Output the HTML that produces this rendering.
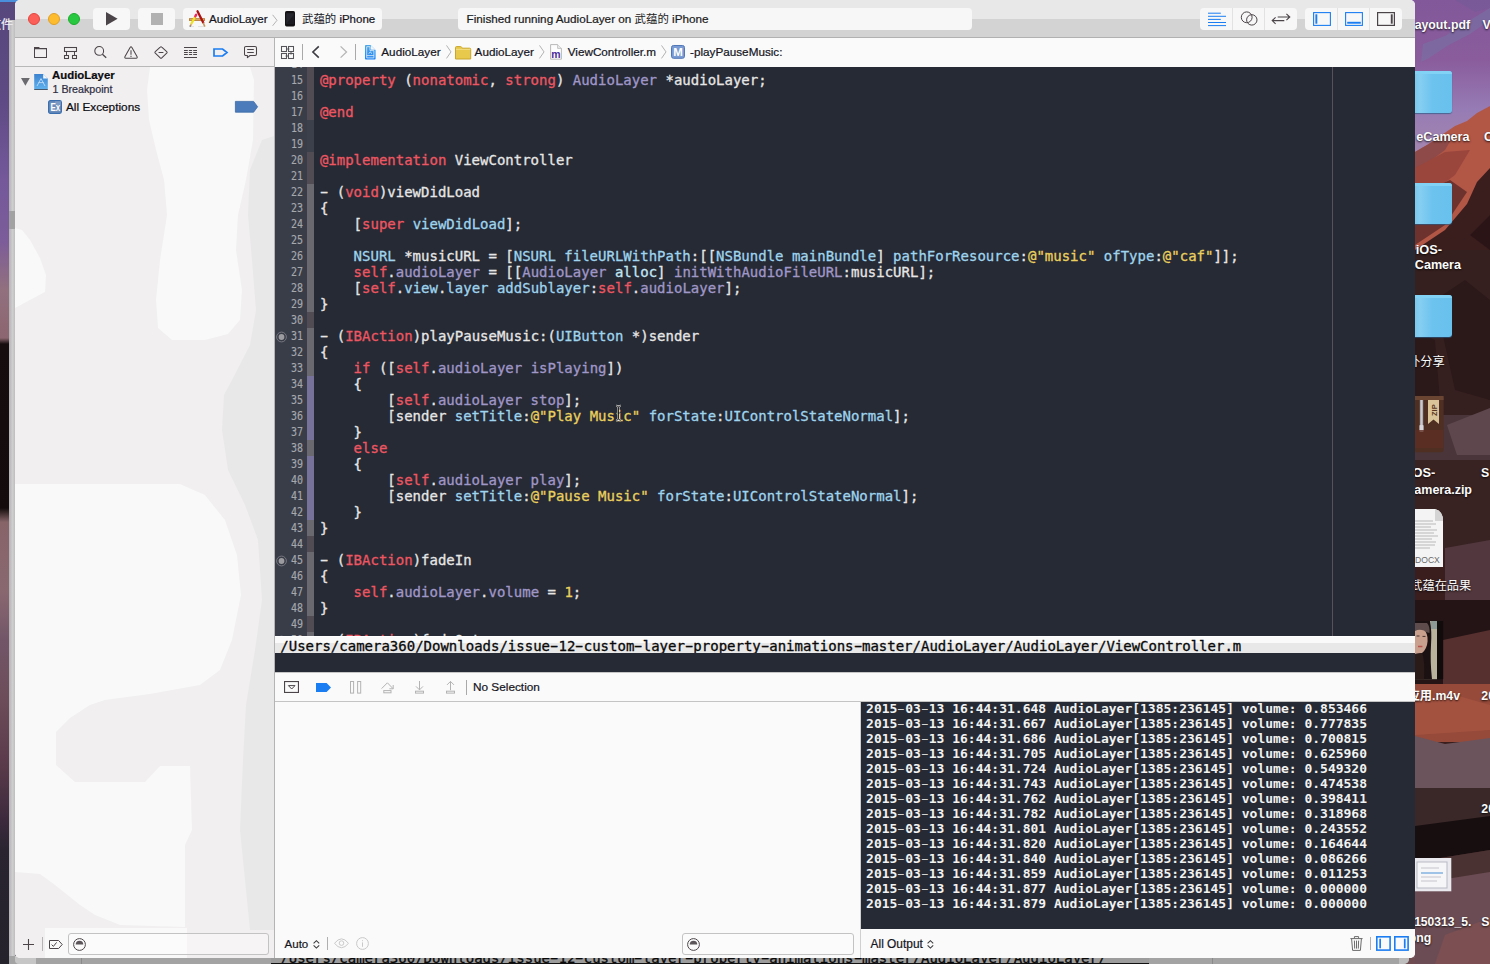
<!DOCTYPE html>
<html lang="zh">
<head>
<meta charset="utf-8">
<title>AudioLayer — ViewController.m</title>
<style>
*{box-sizing:border-box;margin:0;padding:0}
html,body{width:1490px;height:964px;overflow:hidden}
body{position:relative;background:#6e4c50;font-family:"Liberation Sans","Noto Sans CJK SC",sans-serif;font-size:11px;color:#111}
.abs{position:absolute}
/* desktop */
#deskL{left:0;top:0;width:24px;height:964px;background:linear-gradient(#56477c 0,#5e4a84 100px,#74589a 180px,#7c5c9a 240px,#92707e 290px,#8c6670 338px,#160d0e 344px,#130b0c 508px,#866468 522px,#8a6870 590px,#725668 640px,#6c4c58 700px,#5c3c4c 760px,#3c2a3c 820px,#292430 850px,#25222c 964px)}
#deskLg{left:9px;top:20px;width:6px;height:944px;background:linear-gradient(90deg,#b4b2b4,#d0cfd0 60%,#bdbdbd)}
#deskR{left:1415px;top:0;width:75px;height:964px;overflow:hidden;background:linear-gradient(#8a5c9a 0,#7a62a4 90px,#8a70a8 130px,#a06a78 170px,#8c4a44 220px,#5a2c28 290px,#3a2020 360px,#2c1a1c 430px,#3c2628 520px,#2a1a1c 600px,#6a3c34 700px,#8c4c40 720px,#5a3c40 780px,#3a2a2c 830px,#2a1c1e 880px,#5a3c44 910px,#8a4c4c 964px)}
#deskB{left:9px;top:956px;width:1400px;height:8px;background:#a3a3a3;overflow:hidden;border-radius:0 0 5px 0}
.dlabel{margin-top:0.6px;-webkit-text-stroke:0 !important;color:#fbfbfb;font-weight:bold;font-size:12px;white-space:nowrap;text-shadow:0 1px 2px rgba(0,0,0,.8)}
.folder{background:linear-gradient(90deg,#6abfea 0,#86cff2 25%,#6cc3ee 55%,#68c0ec 100%);border-radius:3px}
/* window */
#win{left:15px;top:0;width:1400px;height:958px;border-radius:5px;overflow:hidden;background:#fafafa}
#titlebar{left:0;top:0;width:1400px;height:38px;background:linear-gradient(#e8e8e8 0,#e8e8e8 19px,#d3d3d3 19px,#d3d3d3 37px,#b1b1b1 37px)}
.tbtn{background:#f7f7f7;border-radius:4px;height:22px;top:8px}
.light{width:12px;height:12px;border-radius:6px;top:13px}
.seg{top:8px;height:22px;background:#f7f7f7;border-radius:4px}
.segd{top:8px;width:1px;height:22px;background:#e2e2e2}
/* navigator */
#nav{left:0;top:38px;width:259px;height:920px;background:#f1eff0}
#navbar{left:0;top:0;width:259px;height:29px;border-bottom:1px solid #b9b8b9;background:#f1eff0}
#split{left:259px;top:38px;width:1px;height:920px;background:#b4b4b4}
.blob{background:#f9f9f9}
/* editor */
#jump{left:260px;top:38px;width:1140px;height:29px;background:#fafafa}
#code{left:260px;top:67px;width:1140px;height:569px;background:#262a34;overflow:hidden;font-family:"DejaVu Sans Mono","Liberation Mono",monospace}
#gutter{left:0;top:0;width:32px;height:569px;background:#393d48}
#ribbon{left:32px;top:0;width:7px;height:569px;background:#514c54}
#nums{left:-12.3px;top:-11.4px;width:40px;text-align:right;font-size:11.5px;line-height:16px;color:#a6a8ae;-webkit-text-stroke:0.15px;transform:scaleX(0.87);transform-origin:100% 0}
#nums div{height:16px}
#lines{left:44.9px;top:-11px;font-size:14px;line-height:16px;color:#e6e6e6;white-space:pre;-webkit-text-stroke:0.3px}
#lines div{height:16px}
i{font-style:normal;display:inline-block;transform:scaleX(1.75)}
.k{color:#ee5662}.w{color:#e6e6e6}.c{color:#9fd4ee}.c2{color:#c4e6f4}.l{color:#a097c9}.y{color:#ead05e}
#guide{left:1057px;top:0;width:1px;height:569px;background:#585157}
#tip{left:260px;top:636.2px;width:1140px;height:17.3px;background:linear-gradient(#fff 0,#fff 1.2px,#fafafa 1.2px,#fafafa 7.4px,#e8e8e8 7.4px,#e8e8e8 18px);font-family:"DejaVu Sans Mono","Liberation Mono",monospace;font-size:14px;line-height:20px;color:#0a0a0a;white-space:pre;padding-left:5.3px;overflow:hidden;-webkit-text-stroke:0.3px}
#dark2{left:260px;top:653px;width:1140px;height:19px;background:#262a34}
#dbgbar{left:260px;top:672px;width:1140px;height:30px;background:#fafafa;border-bottom:1px solid #c4c4c4}
#vars{left:260px;top:702px;width:585px;height:228px;background:#fafafa}
#vsplit{left:845px;top:702px;width:1px;height:256px;background:#d0d0d0}
#console{left:846px;top:702px;width:554px;height:227.4px;background:#262a34;font-family:"DejaVu Sans Mono","Liberation Mono",monospace;font-weight:bold;font-size:13px;line-height:15px;color:#f2f2f2;white-space:pre;padding:0 0 0 5.1px;overflow:hidden}
#console i{font-weight:normal;opacity:.85}
#console div{position:relative;top:-1px}
#console div{height:15px}
#botbar{left:260px;top:929px;width:1140px;height:29px;background:#fafafa}
.fbox{border:1px solid #c3c3c3;border-radius:3px;background:rgba(255,255,255,.35)}
svg{position:absolute;overflow:visible}
.t{white-space:nowrap;position:absolute;-webkit-text-stroke:0.22px}
.cj{-webkit-text-stroke:0;font-size:11.4px}
</style>
</head>
<body>
<div id="deskL" class="abs"></div>
<div id="deskLg" class="abs"><div class="abs" style="left:0;top:191px;width:6px;height:18px;background:#a3a2a3"></div></div>
<div id="deskR" class="abs">
<svg style="left:0;top:0" width="75" height="964" viewBox="0 0 75 964">
<defs><linearGradient id="sky" x1="0" y1="0" x2="0" y2="1"><stop offset="0" stop-color="#82589a"/><stop offset="0.3" stop-color="#8a5c9c"/><stop offset="0.55" stop-color="#967cb4"/><stop offset="0.78" stop-color="#a686b0"/><stop offset="1" stop-color="#a88290"/></linearGradient></defs>
<rect x="0" y="0" width="75" height="200" fill="url(#sky)"/><polygon points="8,44 30,36 52,22 75,8 75,20 55,34 32,46 14,58 6,62" fill="#7a6ea2" opacity=".75"/><polygon points="40,0 75,0 75,8 60,12" fill="#785a98" opacity=".8"/>
<polygon points="0,152 12,145 25,136 40,126 52,121 62,113 75,106 75,964 0,964" fill="#b25646"/>
<polygon points="0,152 12,145 25,138 40,133 30,150 10,165 0,172" fill="#8e4a48"/>
<polygon points="0,168 30,152 55,150 40,175 20,190 0,200" fill="#9a463c"/>
<polygon points="0,196 35,180 52,192 30,225 0,245" fill="#6e322e"/>
<polygon points="75,168 62,182 52,204 30,230 0,250 0,964 75,964" fill="#3a1e1e"/>
<polygon points="75,215 55,235 75,250" fill="#2a1416"/>
<rect x="0" y="250" width="75" height="165" fill="#36201f"/>
<polygon points="20,300 50,280 75,300 75,400 40,390" fill="#2b1819"/>
<polygon points="0,330 20,340 25,400 0,410" fill="#2b1819"/>
<rect x="0" y="415" width="75" height="45" fill="#4a363a"/>
<polygon points="32,425 75,408 75,455 42,455" fill="#5e484e"/>
<rect x="0" y="460" width="75" height="90" fill="#382222"/>
<polygon points="30,548 75,540 75,600 30,600" fill="#52383e"/>
<rect x="0" y="600" width="75" height="90" fill="#241415"/>
<polygon points="28,640 75,630 75,700 28,700" fill="#56302e"/>
<rect x="0" y="684" width="75" height="58" fill="#964a3a"/>
<polygon points="0,700 40,695 75,705 75,730 0,735" fill="#a45240"/>
<polygon points="0,736 30,744 75,738 75,792 0,792" fill="#6c545c"/>
<rect x="0" y="788" width="75" height="48" fill="#3a2829"/>
<polygon points="0,826 75,816 75,850 0,862" fill="#170e10"/>
<polygon points="0,862 75,850 75,882 0,892" fill="#4a3232"/>
<polygon points="0,884 75,872 75,964 0,964" fill="#6c4c54"/>
<polygon points="30,935 75,918 75,964 20,964" fill="#7c5052"/>
</svg><div class="abs folder" style="left:-6px;top:71px;width:43px;height:42.4px;box-shadow:0 1px 1px rgba(40,90,130,.7)"></div><div class="abs" style="left:-6px;top:71px;width:43px;height:3px;background:#82d2f5;border-radius:3px 3px 0 0"></div><div class="abs folder" style="left:-6px;top:183.2px;width:43px;height:41.2px;box-shadow:0 1px 1px rgba(40,90,130,.7)"></div><div class="abs" style="left:-6px;top:183.2px;width:43px;height:3px;background:#82d2f5;border-radius:3px 3px 0 0"></div><div class="abs folder" style="left:-6px;top:295.3px;width:43px;height:41.4px;box-shadow:0 1px 1px rgba(40,90,130,.7)"></div><div class="abs" style="left:-6px;top:295.3px;width:43px;height:3px;background:#82d2f5;border-radius:3px 3px 0 0"></div><span class="t dlabel" style="right:20px;top:16px;font-size:12.3px;line-height:16px;">Layout.pdf</span><span class="t dlabel" style="left:67.5px;top:16px;font-size:12.3px;line-height:16px">V</span><span class="t dlabel" style="right:20.5px;top:128.5px;font-size:12.6px;line-height:16px;">eCamera</span><span class="t dlabel" style="left:69px;top:128.5px;font-size:12.3px;line-height:16px">C</span><span class="t dlabel" style="right:48px;top:241px;font-size:12.8px;line-height:16px;">iOS-</span><span class="t dlabel" style="right:29px;top:256.5px;font-size:12.6px;line-height:16px;">Camera</span><span class="t dlabel" style="right:45.4px;top:353px;font-size:12.2px;line-height:16px;font-weight:normal;">外分享</span><svg style="left:-8px;top:395.8px" width="37" height="57" viewBox="0 0 37 57"><rect x="0" y="0" width="36.6" height="56.2" rx="2.5" fill="#4e2f22"/><rect x="0" y="0" width="36.6" height="4" fill="#6a4632"/><rect x="13" y="4" width="3" height="26" fill="#c9c9cf"/><path d="M13,4 v26 M16,4 v26" stroke="#777" stroke-width="0.6"/><rect x="12.4" y="29" width="4.2" height="7" rx="1" fill="#d8d8dc"/><path d="M21,4 H32 V28 L26.5,23.5 L21,28 Z" fill="#d9c49a"/><text transform="translate(29.6,20) rotate(-90)" font-family="Liberation Sans,sans-serif" font-weight="bold" font-size="7.5" fill="#5a3420">ZIP</text><rect x="8" y="34" width="28" height="18" fill="#5f2e24" opacity=".8"/></svg><span class="t dlabel" style="right:54.8px;top:464px;font-size:12.8px;line-height:16px;">iOS-</span><span class="t dlabel" style="left:66px;top:464px;font-size:12.3px;line-height:16px">S</span><span class="t dlabel" style="right:18px;top:481px;font-size:12.5px;line-height:16px;">Camera.zip</span><svg style="left:-10px;top:508.6px" width="39" height="59" viewBox="0 0 39 59"><path d="M0,0 H30 Q38,2 38,12 V58 H0 Z" fill="#f4f4f4"/><path d="M30,0 Q38,2 38,12 H30 Z" fill="#d4d4d4"/><g stroke="#a9a9a9" stroke-width="0.8"><path d="M10,12 H28 M10,15 H31 M10,18 H26 M10,21 H32 M10,24 H29 M10,27 H33 M10,30 H27 M10,33 H31 M10,36 H30 M10,39 H25"/></g><text x="10" y="54" font-family="Liberation Sans,sans-serif" font-size="8.6" fill="#6a6a6a">DOCX</text></svg><span class="t dlabel" style="right:18.8px;top:577px;font-size:12.2px;line-height:16px;font-weight:normal;">武蕴在品果</span><svg style="left:0;top:620.8px" width="29" height="59" viewBox="0 0 29 59"><rect x="0" y="0" width="28.2" height="58.2" fill="#120b0c"/><rect x="0" y="0" width="22" height="58.2" fill="#b9b39c"/><rect x="16" y="0" width="6" height="8" fill="#8e9a96"/><path d="M0,0 H15 Q17,10 16,24 Q15,40 17,58.2 H0 Z" fill="#1c1112"/><path d="M0,2 H12 Q15,5 14.5,12 L3,9 L0,12 Z" fill="#5e4c4c"/><path d="M0,10 Q4,8 9,9.5 Q13,12 12.6,20 Q12,28 7,32 L0,33 Z" fill="#c9a08e"/><path d="M1.5,15 h3 M7.5,15.4 h3" stroke="#4a3430" stroke-width="1"/><path d="M3,25.5 h4.4" stroke="#b8544e" stroke-width="1.5"/><path d="M0,33 L7,32 Q10,38 9,58.2 H0Z" fill="#2a1a18"/></svg><span class="t dlabel" style="right:30px;top:687.8px;font-size:12.3px;line-height:16px;">应用.m4v</span><span class="t dlabel" style="left:66.3px;top:687.8px;font-size:12.3px;line-height:16px">20</span><span class="t dlabel" style="left:66.3px;top:800.5px;font-size:12.3px;line-height:16px">20</span><svg style="left:-4px;top:857.5px" width="41" height="34" viewBox="0 0 41 34"><rect x="0" y="0" width="40.3" height="33.3" fill="#e9e9ee"/><rect x="6" y="4" width="30" height="26" fill="#f6f6f8" stroke="#b9b9c4" stroke-width="1"/><path d="M10,15 H32" stroke="#7aaee0" stroke-width="1.4"/><path d="M10,10 H28 M10,19 H30 M10,23 H26" stroke="#c4c4cc" stroke-width="1"/></svg><span class="t dlabel" style="right:18.7px;top:913.1px;font-size:12.1px;line-height:16px;">20150313_5.</span><span class="t dlabel" style="left:66.3px;top:913.1px;font-size:12.3px;line-height:16px">S</span><span class="t dlabel" style="right:58.7px;top:929.1px;font-size:12.3px;line-height:16px;">png</span>
</div>
<div class="abs" style="left:1405px;top:0;width:10px;height:10px;background:#835b9d"></div><div class="abs" style="left:1405px;top:948px;width:10px;height:10px;background:#7a5860"></div>
<div class="abs" style="left:0;top:0;width:24px;height:2px;background:#4a8fdc"></div>
<span class="t" style="right:1477px;top:17px;font-size:12px;line-height:16px;color:#efeff4;font-weight:normal">文件</span>
<div id="deskB" class="abs">
<div class="abs" style="left:6px;top:0;width:21px;height:8px;background:#c6c6c6;border-radius:0 0 0 4px"></div>
<div class="abs" style="left:72px;top:0;width:1px;height:8px;background:#8a8a8a"></div>
<div class="abs" style="left:262px;top:0;width:878px;height:8px;background:#9c9c9c;border-bottom:1px solid #111;overflow:hidden;font-family:'DejaVu Sans Mono','Liberation Mono',monospace;font-size:14px;line-height:20px;color:#0a0a0a;white-space:pre;-webkit-text-stroke:0.3px"><span style="position:absolute;left:9.3px;top:-8.5px">/Users/camera360/Downloads/issue<i>-</i>12<i>-</i>custom<i>-</i>layer<i>-</i>property<i>-</i>animations<i>-</i>master/AudioLayer/AudioLayer/</span></div>
<div class="abs" style="left:1203px;top:0;width:1px;height:8px;background:#8a8a8a"></div>
<div class="abs" style="left:1390px;top:0;width:10px;height:8px;background:#bdbdbd"></div>
</div>

<div id="win" class="abs">
 <div id="titlebar" class="abs">

  <div class="abs light" style="left:13px;background:#fc5f57;border:0.5px solid #e2463f"></div>
  <div class="abs light" style="left:33px;background:#fdbc2e;border:0.5px solid #e0a028"></div>
  <div class="abs light" style="left:53px;background:#28c840;border:0.5px solid #1eab2e"></div>
  <div class="abs tbtn" style="left:78px;width:37px"></div>
  <svg style="left:91px;top:12px" width="12" height="14"><path d="M0,0 L11.6,6.8 L0,13.6Z" fill="#4b4549"/></svg>
  <div class="abs tbtn" style="left:123px;width:37px"></div>
  <div class="abs" style="left:136px;top:13px;width:12px;height:12px;background:#b1b1b1"></div>
  <div class="abs tbtn" style="left:168px;width:199px"></div>
  <svg style="left:173px;top:10px" width="18" height="18" viewBox="0 0 18 18">
    <rect x="1" y="8.2" width="16" height="2.7" fill="#b57a32"/><rect x="1.8" y="9" width="14.4" height="1.1" fill="#d9aa62"/>
    <path d="M9.5,1.2 L15.2,12.6" stroke="#b01212" stroke-width="2.3" stroke-linecap="round" fill="none"/>
    <path d="M15.2,12.8 L16.8,16.6" stroke="#c8985e" stroke-width="1.6" fill="none"/>
    <path d="M7.4,6.2 L3.2,14" stroke="#efe21e" stroke-width="2.3" fill="none"/>
    <path d="M8.2,4.7 L7.3,6.3" stroke="#ee2a5e" stroke-width="2.4" stroke-linecap="round" fill="none"/>
    <path d="M3.2,14 L2.5,15.8" stroke="#d9a86a" stroke-width="1.8" fill="none"/>
    <path d="M2.5,15.7 L2.1,16.6" stroke="#1c1c24" stroke-width="1.4" fill="none"/>
    <path d="M2,16.6 H6 M10,16.6 H16" stroke="#cfcfcf" stroke-width="0.6"/>
  </svg>
  <span class="t" style="left:194px;top:12px;font-size:11.6px;line-height:14px;color:#16161e">AudioLayer</span>
  <svg style="left:257px;top:14px" width="6" height="13"><path d="M0.6,0.8 L5,6.3 L0.6,11.8" fill="none" stroke="#b4b4b4" stroke-width="1"/></svg>
  <svg style="left:270px;top:11px" width="10" height="16"><rect x="0" y="0" width="10" height="15.4" rx="1.6" fill="#141214"/><rect x="1.2" y="2.2" width="7.6" height="10.6" fill="#26262e"/><path d="M1.2,12.8 L8.8,4 L8.8,12.8Z" fill="#1a1a20"/></svg>
  <span class="t" style="left:287px;top:11px;font-size:11.5px;line-height:16px;color:#16161e"><span class="cj">武蕴的</span> iPhone</span>
  <div class="abs tbtn" style="left:442.5px;width:514.5px"></div>
  <span class="t" style="left:451.5px;top:11px;font-size:11.72px;line-height:16px;color:#1c1c1c">Finished running AudioLayer on <span class="cj">武蕴的</span> iPhone</span>
  <div class="abs seg" style="left:1185px;width:97px"></div>
  <div class="abs segd" style="left:1217px"></div><div class="abs segd" style="left:1249px"></div>
  <div class="abs seg" style="left:1290px;width:97px"></div>
  <div class="abs segd" style="left:1322px"></div><div class="abs segd" style="left:1354px"></div>
<svg style="left:1193px;top:12px" width="18" height="15" viewBox="0 0 18 15"><path d="M0,1.2 H12.8 M0,4.3 H18 M0,7.4 H12.8 M0,10.5 H18 M0,13.6 H18" stroke="#1b7df2" stroke-width="1"/></svg><svg style="left:1225px;top:11px" width="14" height="15" viewBox="0 0 14 15"><circle cx="6.7" cy="6.3" r="5.4" fill="none" stroke="#4b4549" stroke-width="1"/><circle cx="11.8" cy="8.9" r="5.2" fill="none" stroke="#4b4549" stroke-width="1"/></svg><svg style="left:1256px;top:12px" width="22" height="14" viewBox="0 0 22 14"><g fill="none" stroke="#4b4549" stroke-width="1.1"><path d="M6.7,5 H18.6 M15.4,1.8 L18.8,5 L15.4,8.2"/><path d="M13.3,8.6 H1.4 M4.6,5.4 L1.2,8.6 L4.6,11.8"/></g></svg><svg style="left:1298px;top:12px" width="18" height="14" viewBox="0 0 18 14"><rect x="0.6" y="0.6" width="16.8" height="12.8" fill="none" stroke="#1b7df2" stroke-width="1.1"/><rect x="2.4" y="2.3" width="1.9" height="9.4" fill="#1b7df2"/></svg><svg style="left:1330px;top:12px" width="18" height="14" viewBox="0 0 18 14"><rect x="0.6" y="0.6" width="16.8" height="12.8" fill="none" stroke="#1b7df2" stroke-width="1.1"/><rect x="2.2" y="9.8" width="13.6" height="1.9" fill="#1b7df2"/></svg><svg style="left:1362px;top:12px" width="18" height="14" viewBox="0 0 18 14"><rect x="0.6" y="0.6" width="16.8" height="12.8" fill="none" stroke="#4b4549" stroke-width="1.2"/><rect x="13.8" y="2.3" width="1.9" height="9.4" fill="#4b4549"/></svg>

 </div>
 <div id="nav" class="abs">
<div id="navbar" class="abs"><svg style="left:19px;top:9px" width="13" height="11" viewBox="0 0 13 11"><path d="M0.5,10.5 V0.5 H4.7 L5.9,1.6 H12.5 V10.5 Z M0.5,1.6 H5.9" fill="none" stroke="#4b4549" stroke-width="1.05"/></svg><svg style="left:49px;top:9px" width="13" height="12" viewBox="0 0 13 12"><g fill="none" stroke="#4b4549" stroke-width="1.05"><rect x="0.5" y="0.5" width="12" height="4"/><path d="M2.5,4.5 V8.5 M10.5,4.5 V8.5"/><rect x="0.5" y="8.5" width="4" height="3"/><rect x="8.5" y="8.5" width="4" height="3"/></g></svg><svg style="left:79px;top:8px" width="13" height="12" viewBox="0 0 13 12"><circle cx="5.2" cy="4.9" r="4.4" fill="none" stroke="#4b4549" stroke-width="1.05"/><path d="M8.4,8.2 L12.2,11.8" stroke="#4b4549" stroke-width="1.25"/></svg><svg style="left:108.5px;top:8px" width="14" height="13" viewBox="0 0 14 13"><path d="M6.1,1.5 Q7,0.1 7.9,1.5 L13,10.5 Q13.7,12.2 12.1,12.3 H1.9 Q0.3,12.2 1,10.5 Z" fill="none" stroke="#4b4549" stroke-width="1.05" stroke-linejoin="round"/><path d="M7,4.2 V8.8 M7,9.8 V11" stroke="#4b4549" stroke-width="1.05"/></svg><svg style="left:138.5px;top:8px" width="14" height="13" viewBox="0 0 14 13"><path d="M6.2,1.1 Q7,0.3 7.8,1.1 L12.7,5.7 Q13.5,6.4 12.7,7.2 L7.8,11.8 Q7,12.6 6.2,11.8 L1.3,7.2 Q0.5,6.4 1.3,5.7 Z" fill="none" stroke="#4b4549" stroke-width="1.05"/><path d="M4.6,6.5 H9.4" stroke="#4b4549" stroke-width="1.05"/></svg><svg style="left:169px;top:9px" width="13" height="11" viewBox="0 0 13 11"><path d="M0,0.5 H13 M0,10.5 H13" stroke="#4b4549" stroke-width="1.05"/><path d="M0,3.5 H3.8 M4.9,3.5 H8.1 M9.2,3.5 H13 M0,5.5 H3.8 M4.9,5.5 H8.1 M9.2,5.5 H13 M0,7.5 H3.8 M4.9,7.5 H8.1 M9.2,7.5 H13" stroke="#4b4549" stroke-width="1"/></svg><svg style="left:198px;top:10px" width="15" height="9" viewBox="0 0 15 9"><path d="M1,1 H9.6 L14,4.5 L9.6,8 H1 Z" fill="none" stroke="#1b7df2" stroke-width="1.7" stroke-linejoin="miter"/></svg><svg style="left:229px;top:8px" width="13" height="12" viewBox="0 0 13 12"><path d="M2,0.5 H11 Q12.5,0.5 12.5,2 V8 Q12.5,9.5 11,9.5 H6 L3.4,11.6 V9.5 H2 Q0.5,9.5 0.5,8 V2 Q0.5,0.5 2,0.5 Z" fill="none" stroke="#4b4549" stroke-width="1.05" stroke-linejoin="round"/><path d="M3.2,3.5 H9.8 M3.2,6.5 H9.8" stroke="#4b4549" stroke-width="1"/></svg></div>
<svg style="left:0;top:0" width="259" height="920" viewBox="0 0 259 920"><polygon points="135,29 235,29 239,42 238,102 231,142 223,177 221,212 227,252 225,282 213,296 190,302 157,302 143,290 141,262 145,222 152,177 149,142 141,112 134,82 132,52" fill="#f9f9f9"/><polygon points="0,190 7,192 15,202 25,220 31,237 30,254 15,262 0,270" fill="#f9f9f9"/><polygon points="259,98 247,102 235,132 233,177 237,222 241,272 235,307 217,342 209,357 207,392 213,432 230,467 243,502 247,562 240,612 231,667 228,722 225,792 230,842 235,892 259,892" fill="#e9e8e9"/><polygon points="0,446 165,446 190,457 210,482 222,517 226,557 217,602 205,632 185,647 135,656 90,662 75,667 55,680 41,694 41,727 60,744 130,744 145,728 175,728 177,792 170,807 170,889 105,887 80,877 65,867 40,847 25,836 0,834" fill="#f9f9f9"/><polygon points="30,890 172,890 172,920 30,920" fill="#f9f9f9"/></svg><svg style="left:6px;top:40.3px" width="9" height="8" viewBox="0 0 9 8"><path d="M0,0 H8.8 L4.4,7.8 Z" fill="#6b6b6f"/></svg><svg style="left:19px;top:36px" width="14" height="16" viewBox="0 0 14 16"><defs><linearGradient id="pg" x1="0" y1="0" x2="0" y2="1"><stop offset="0" stop-color="#3c82cf"/><stop offset="1" stop-color="#60b2ee"/></linearGradient></defs><path d="M0.2,0 H9.2 L13.8,4.6 V15.2 H0.2 Z" fill="url(#pg)"/><path d="M0.2,15.2 H13.8 V16 H0.2 Z" fill="#1c2c40"/><path d="M9.2,0 L13.8,4.6 H9.2 Z" fill="#f4f8fc"/><path d="M3,12 L7,4.6 L11,12 M4.4,8.6 H9.8" stroke="#bcdaf6" stroke-width="0.9" fill="none"/></svg><span class="t" style="left:37px;top:29.5px;font-size:11.4px;font-weight:bold;line-height:14px;color:#0c0c10">AudioLayer</span><span class="t" style="left:37.5px;top:44px;font-size:10.7px;line-height:14px;color:#2e2e42">1 Breakpoint</span><svg style="left:33px;top:62px" width="14" height="14" viewBox="0 0 14 14"><rect x="0.6" y="0.6" width="12.8" height="12.8" rx="1.8" fill="#6c8cba" stroke="#3a6eae" stroke-width="1.2"/><path d="M7,1.2 H12.8 V5 H7 Z" fill="#7d9ac4"/><text x="2.4" y="11.1" font-family="Liberation Sans,sans-serif" font-weight="bold" font-size="11" fill="#fff" textLength="9.8" lengthAdjust="spacingAndGlyphs">Ex</text></svg><span class="t" style="left:51px;top:61px;font-size:11.8px;line-height:16px;color:#0c0c10">All Exceptions</span><svg style="left:220.2px;top:63px" width="23" height="11.6" viewBox="0 0 23 11.6"><path d="M0.4,0.4 H18.6 L22.6,5.8 L18.6,11.2 H0.4 Z" fill="#4b7bbb" stroke="#3d69a8" stroke-width="0.8"/></svg><svg style="left:8px;top:901px" width="11" height="11" viewBox="0 0 11 11"><path d="M5.5,0 V11 M0,5.5 H11" stroke="#4b4549" stroke-width="1.1"/></svg><div class="abs" style="left:27px;top:899px;width:1px;height:14px;background:#b5b5b5"></div><svg style="left:34px;top:902px" width="14" height="9" viewBox="0 0 14 9"><path d="M0.5,0.5 H9.6 L13.2,4.5 L9.6,8.5 H0.5 Z" fill="none" stroke="#4b4549" stroke-width="1"/><path d="M2.6,4.6 L4.4,6.4 L7.6,2.4" fill="none" stroke="#4b4549" stroke-width="1"/></svg><div class="abs fbox" style="left:53px;top:895px;width:200.5px;height:21.5px"></div><svg style="left:58px;top:900px" width="13" height="13" viewBox="0 0 13 13"><circle cx="6.5" cy="6.5" r="5.9" fill="none" stroke="#4b4549" stroke-width="1"/><path d="M2.7,6.6 A3.8,3.8 0 0 1 10.3,6.6 Z" fill="#5b5559"/></svg>
 </div>
 <div id="split" class="abs"></div>
 <div id="jump" class="abs">
<svg style="left:6px;top:8px" width="13" height="13" viewBox="0 0 13 13"><g fill="none" stroke="#55555a" stroke-width="1.05"><rect x="0.5" y="0.5" width="5" height="5"/><rect x="7.5" y="0.5" width="5" height="5"/><rect x="0.5" y="7.5" width="5" height="5"/><rect x="7.5" y="7.5" width="5" height="5"/><path d="M5.5,3 H8.4 M10,5.5 V8.4 M7.5,10 H4.6"/></g></svg><div class="abs" style="left:27px;top:6px;width:1px;height:16px;background:#a9a9a9"></div><svg style="left:37px;top:8px" width="8" height="12" viewBox="0 0 8 12"><path d="M6.8,0.4 L0.9,6 L6.8,11.6" fill="none" stroke="#3c3c42" stroke-width="1.6"/></svg><svg style="left:65px;top:8px" width="8" height="12" viewBox="0 0 8 12"><path d="M0.6,0.4 L6.5,6 L0.6,11.6" fill="none" stroke="#b5b5b5" stroke-width="1.3"/></svg><div class="abs" style="left:80px;top:6px;width:1px;height:16px;background:#a9a9a9"></div><svg style="left:89.6px;top:6.7px" width="10.6" height="14.6" viewBox="0 0 10.6 14.6"><defs><linearGradient id="pj" x1="0" y1="0" x2="0" y2="1"><stop offset="0" stop-color="#4ea8ea"/><stop offset="1" stop-color="#1d84f7"/></linearGradient></defs><path d="M0.8,0 H5.6 L10.6,5 V13.8 Q10.6,14.6 9.8,14.6 H0.8 Q0,14.6 0,13.8 V0.8 Q0,0 0.8,0 Z" fill="url(#pj)"/><path d="M5.8,0.2 L10.4,4.8 H6.6 Q5.8,4.8 5.8,4 Z" fill="#f2f4f6"/><path d="M1.7,1.7 H5 V5.6 H8.9 V12.9 H1.7 Z M1.7,10.6 H8.9" fill="none" stroke="#e2eff4" stroke-width="0.8"/><path d="M3.6,8.6 Q5.3,5.6 7,8.6" fill="none" stroke="#e2eff4" stroke-width="0.9"/></svg><span class="t" style="left:106.3px;top:6px;font-size:11.72px;line-height:16px;color:#16161e">AudioLayer</span><svg style="left:171px;top:7px" width="6" height="14" viewBox="0 0 6 14"><path d="M0.5,0.4 L5,6.9 L0.5,13.4" fill="none" stroke="#b3b3b3" stroke-width="1"/></svg><svg style="left:179.9px;top:7.5px" width="16.2" height="13.6" viewBox="0 0 16.2 13.6"><path d="M0.5,13 V1.6 Q0.5,0.6 1.5,0.6 H5.6 Q6.4,0.6 6.8,1.4 L7.2,2.2 H14.7 Q15.7,2.2 15.7,3.2 V13 Z" fill="#e9c94c" stroke="#c9a62c" stroke-width="1"/><path d="M1,3.4 H15.2" stroke="#f3de86" stroke-width="1"/></svg><span class="t" style="left:199.6px;top:6px;font-size:11.72px;line-height:16px;color:#16161e">AudioLayer</span><svg style="left:264px;top:7px" width="6" height="14" viewBox="0 0 6 14"><path d="M0.5,0.4 L5,6.9 L0.5,13.4" fill="none" stroke="#b3b3b3" stroke-width="1"/></svg><svg style="left:274.8px;top:6px" width="12" height="15.8" viewBox="0 0 12 15.8"><path d="M0.6,0.6 H7.6 L11.4,4.4 V15.2 H0.6 Z" fill="#fdfdfd" stroke="#b9b9b9" stroke-width="1"/><path d="M7.6,0.6 V4.4 H11.4" fill="#ececec" stroke="#b9b9b9" stroke-width="0.8"/><text x="6" y="13.6" font-family="Liberation Sans,sans-serif" font-weight="bold" font-size="10.5" text-anchor="middle" fill="#4a2a9c">m</text></svg><span class="t" style="left:292.7px;top:6px;font-size:11.72px;line-height:16px;color:#16161e">ViewController.m</span><svg style="left:386px;top:7px" width="6" height="14" viewBox="0 0 6 14"><path d="M0.5,0.4 L5,6.9 L0.5,13.4" fill="none" stroke="#b3b3b3" stroke-width="1"/></svg><svg style="left:396px;top:7px" width="14" height="13.8" viewBox="0 0 14 13.8"><rect x="0.5" y="0.5" width="13" height="12.8" rx="2" fill="#7a9bd3" stroke="#4e76b8" stroke-width="1"/><text x="7" y="11.2" font-family="Liberation Sans,sans-serif" font-weight="bold" font-size="11.5" text-anchor="middle" fill="#fff">M</text></svg><span class="t" style="left:415px;top:6px;font-size:11.72px;line-height:16px;color:#16161e">-playPauseMusic:</span>
 </div>
 <div id="code" class="abs">
  <div id="gutter" class="abs"></div>
  <div id="ribbon" class="abs">
<div class="abs" style="left:0;top:-11px;width:7px;height:64px;background:#514c54"></div><div class="abs" style="left:0;top:53px;width:7px;height:32px;background:#3c404a"></div><div class="abs" style="left:0;top:85px;width:7px;height:32px;background:#514c54"></div><div class="abs" style="left:0;top:117px;width:7px;height:128px;background:#69696f"></div><div class="abs" style="left:0;top:245px;width:7px;height:16px;background:#514c54"></div><div class="abs" style="left:0;top:261px;width:7px;height:48px;background:#69696f"></div><div class="abs" style="left:0;top:309px;width:7px;height:64px;background:#76729a"></div><div class="abs" style="left:0;top:373px;width:7px;height:16px;background:#69696f"></div><div class="abs" style="left:0;top:389px;width:7px;height:64px;background:#76729a"></div><div class="abs" style="left:0;top:453px;width:7px;height:16px;background:#69696f"></div><div class="abs" style="left:0;top:469px;width:7px;height:16px;background:#514c54"></div><div class="abs" style="left:0;top:485px;width:7px;height:64px;background:#69696f"></div><div class="abs" style="left:0;top:549px;width:7px;height:16px;background:#514c54"></div><div class="abs" style="left:0;top:565px;width:7px;height:16px;background:#69696f"></div>
  </div>
  <div id="nums" class="abs">
<div>14</div><div>15</div><div>16</div><div>17</div><div>18</div><div>19</div><div>20</div><div>21</div><div>22</div><div>23</div><div>24</div><div>25</div><div>26</div><div>27</div><div>28</div><div>29</div><div>30</div><div>31</div><div>32</div><div>33</div><div>34</div><div>35</div><div>36</div><div>37</div><div>38</div><div>39</div><div>40</div><div>41</div><div>42</div><div>43</div><div>44</div><div>45</div><div>46</div><div>47</div><div>48</div><div>49</div><div>50</div>
  </div>
  <div id="lines" class="abs"><div>&nbsp;</div><div><span class="k">@property</span><span class="w"> (</span><span class="k">nonatomic</span><span class="w">, </span><span class="k">strong</span><span class="w">) </span><span class="l">AudioLayer</span><span class="w"> *audioLayer;</span></div><div>&nbsp;</div><div><span class="k">@end</span></div><div>&nbsp;</div><div>&nbsp;</div><div><span class="k">@implementation</span><span class="w"> ViewController</span></div><div>&nbsp;</div><div><span class="w"><i>-</i> (</span><span class="k">void</span><span class="w">)viewDidLoad</span></div><div><span class="w">{</span></div><div><span class="w">    [</span><span class="k">super</span><span class="c"> viewDidLoad</span><span class="w">];</span></div><div>&nbsp;</div><div><span class="c">    NSURL</span><span class="w"> *musicURL = [</span><span class="c">NSURL fileURLWithPath</span><span class="w">:[[</span><span class="c">NSBundle mainBundle</span><span class="w">] </span><span class="c">pathForResource</span><span class="w">:</span><span class="y">@"music"</span><span class="c"> ofType</span><span class="w">:</span><span class="y">@"caf"</span><span class="w">]];</span></div><div><span class="k">    self</span><span class="w">.</span><span class="l">audioLayer</span><span class="w"> = [[</span><span class="l">AudioLayer</span><span class="c2"> alloc</span><span class="w">] </span><span class="l">initWithAudioFileURL</span><span class="w">:musicURL];</span></div><div><span class="w">    [</span><span class="k">self</span><span class="w">.</span><span class="c">view</span><span class="w">.</span><span class="c">layer addSublayer</span><span class="w">:</span><span class="k">self</span><span class="w">.</span><span class="l">audioLayer</span><span class="w">];</span></div><div><span class="w">}</span></div><div>&nbsp;</div><div><span class="w"><i>-</i> (</span><span class="k">IBAction</span><span class="w">)playPauseMusic:(</span><span class="c">UIButton</span><span class="w"> *)sender</span></div><div><span class="w">{</span></div><div><span class="k">    if</span><span class="w"> ([</span><span class="k">self</span><span class="w">.</span><span class="l">audioLayer isPlaying</span><span class="w">])</span></div><div><span class="w">    {</span></div><div><span class="w">        [</span><span class="k">self</span><span class="w">.</span><span class="l">audioLayer stop</span><span class="w">];</span></div><div><span class="w">        [sender </span><span class="c">setTitle</span><span class="w">:</span><span class="y">@"Play Music"</span><span class="c"> forState</span><span class="w">:</span><span class="c">UIControlStateNormal</span><span class="w">];</span></div><div><span class="w">    }</span></div><div><span class="k">    else</span></div><div><span class="w">    {</span></div><div><span class="w">        [</span><span class="k">self</span><span class="w">.</span><span class="l">audioLayer play</span><span class="w">];</span></div><div><span class="w">        [sender </span><span class="c">setTitle</span><span class="w">:</span><span class="y">@"Pause Music"</span><span class="c"> forState</span><span class="w">:</span><span class="c">UIControlStateNormal</span><span class="w">];</span></div><div><span class="w">    }</span></div><div><span class="w">}</span></div><div>&nbsp;</div><div><span class="w"><i>-</i> (</span><span class="k">IBAction</span><span class="w">)fadeIn</span></div><div><span class="w">{</span></div><div><span class="k">    self</span><span class="w">.</span><span class="l">audioLayer</span><span class="w">.</span><span class="l">volume</span><span class="w"> = </span><span class="y">1</span><span class="w">;</span></div><div><span class="w">}</span></div><div>&nbsp;</div><div><span class="w"><i>-</i> (</span><span class="k">IBAction</span><span class="w">)fadeOut</span></div></div>
  <div id="guide" class="abs"></div><svg style="left:339.7px;top:337.5px" width="7" height="16" viewBox="0 0 7 16"><path d="M1,0.8 Q3.5,0.8 3.5,2.6 Q3.5,0.8 6,0.8 M3.5,2.6 V13.4 M1,15.2 Q3.5,15.2 3.5,13.4 Q3.5,15.2 6,15.2 M2.2,8 H4.8" fill="none" stroke="#e8e8e8" stroke-width="2"/><path d="M1,0.8 Q3.5,0.8 3.5,2.6 Q3.5,0.8 6,0.8 M3.5,2.6 V13.4 M1,15.2 Q3.5,15.2 3.5,13.4 Q3.5,15.2 6,15.2 M2.2,8 H4.8" fill="none" stroke="#111" stroke-width="0.9"/></svg>
<svg style="left:0;top:263.5px" width="14" height="12"><circle cx="6.5" cy="6" r="4.9" fill="none" stroke="#7c7c84" stroke-width="0.9"/><circle cx="6.5" cy="6" r="2.9" fill="#9c9ca0"/></svg><svg style="left:0;top:567.5px" width="14" height="12"><circle cx="6.5" cy="6" r="4.9" fill="none" stroke="#7c7c84" stroke-width="0.9"/><circle cx="6.5" cy="6" r="2.9" fill="#9c9ca0"/></svg><svg style="left:0;top:487.5px" width="14" height="12"><circle cx="6.5" cy="6" r="4.9" fill="none" stroke="#7c7c84" stroke-width="0.9"/><circle cx="6.5" cy="6" r="2.9" fill="#9c9ca0"/></svg>
 </div>
 <div id="tip" class="abs">/Users/camera360/Downloads/issue<i>-</i>12<i>-</i>custom<i>-</i>layer<i>-</i>property<i>-</i>animations<i>-</i>master/AudioLayer/AudioLayer/ViewController.m</div>
 <div id="dark2" class="abs"></div>
 <div id="dbgbar" class="abs">
<div class="abs" style="left:0;top:0;width:1140px;height:1px;background:#c6c6c6"></div><svg style="left:9px;top:9.2px" width="15" height="12" viewBox="0 0 15 12"><rect x="0.55" y="0.55" width="13.9" height="10.9" fill="none" stroke="#4b4549" stroke-width="1.1"/><path d="M4.4,4.6 H11 L7.7,8 Z" fill="none" stroke="#4b4549" stroke-width="1"/></svg><svg style="left:41px;top:11px" width="15" height="9" viewBox="0 0 15 9"><path d="M0,0 H10.6 L15,4.5 L10.6,9 H0 Z" fill="#1b7df2"/></svg><svg style="left:74.9px;top:9px" width="12" height="12.6" viewBox="0 0 12 12.6"><rect x="0.5" y="0.5" width="3.1" height="11.6" fill="none" stroke="#b3b3b3" stroke-width="1"/><rect x="7.6" y="0.5" width="3.1" height="11.6" fill="none" stroke="#b3b3b3" stroke-width="1"/></svg><svg style="left:106px;top:10.4px" width="13.4" height="11.4" viewBox="0 0 13.4 11.4"><g fill="none" stroke="#b3b3b3" stroke-width="1"><path d="M0.6,6.6 L6.4,0.8 L12,6.6"/><path d="M8.4,6.8 H12.2 V3"/><rect x="2.8" y="8.6" width="7.2" height="2.2"/></g></svg><svg style="left:140px;top:9px" width="9" height="12.6" viewBox="0 0 9 12.6"><g fill="none" stroke="#b3b3b3" stroke-width="1"><path d="M4.5,0 V8.8 M1,5.4 L4.5,8.9 L8,5.4"/><rect x="0.5" y="10.2" width="8" height="1.9"/></g></svg><svg style="left:171px;top:9px" width="9" height="12.6" viewBox="0 0 9 12.6"><g fill="none" stroke="#b3b3b3" stroke-width="1"><path d="M4.5,9.2 V0.4 M1,3.9 L4.5,0.4 L8,3.9"/><rect x="0.5" y="10.2" width="8" height="1.9"/></g></svg><div class="abs" style="left:191px;top:7.5px;width:1px;height:15.5px;background:#a9a9a9"></div><span class="t" style="left:198px;top:7px;font-size:11.8px;line-height:16px;color:#16161e">No Selection</span>
 </div>
 <div id="vars" class="abs"></div>
 <div id="console" class="abs"><div>2015<i>-</i>03<i>-</i>13 16:44:31.648 AudioLayer[1385:236145] volume: 0.853466</div><div>2015<i>-</i>03<i>-</i>13 16:44:31.667 AudioLayer[1385:236145] volume: 0.777835</div><div>2015<i>-</i>03<i>-</i>13 16:44:31.686 AudioLayer[1385:236145] volume: 0.700815</div><div>2015<i>-</i>03<i>-</i>13 16:44:31.705 AudioLayer[1385:236145] volume: 0.625960</div><div>2015<i>-</i>03<i>-</i>13 16:44:31.724 AudioLayer[1385:236145] volume: 0.549320</div><div>2015<i>-</i>03<i>-</i>13 16:44:31.743 AudioLayer[1385:236145] volume: 0.474538</div><div>2015<i>-</i>03<i>-</i>13 16:44:31.762 AudioLayer[1385:236145] volume: 0.398411</div><div>2015<i>-</i>03<i>-</i>13 16:44:31.782 AudioLayer[1385:236145] volume: 0.318968</div><div>2015<i>-</i>03<i>-</i>13 16:44:31.801 AudioLayer[1385:236145] volume: 0.243552</div><div>2015<i>-</i>03<i>-</i>13 16:44:31.820 AudioLayer[1385:236145] volume: 0.164644</div><div>2015<i>-</i>03<i>-</i>13 16:44:31.840 AudioLayer[1385:236145] volume: 0.086266</div><div>2015<i>-</i>03<i>-</i>13 16:44:31.859 AudioLayer[1385:236145] volume: 0.011253</div><div>2015<i>-</i>03<i>-</i>13 16:44:31.877 AudioLayer[1385:236145] volume: 0.000000</div><div>2015<i>-</i>03<i>-</i>13 16:44:31.879 AudioLayer[1385:236145] volume: 0.000000</div></div>
 <div id="botbar" class="abs">
<span class="t" style="left:9.6px;top:7px;font-size:11.5px;line-height:16px;color:#16161e">Auto</span><svg style="left:38.3px;top:10.8px" width="7" height="9" viewBox="0 0 7 9"><path d="M0.6,3.4 L3.4,0.7 L6.2,3.4 M0.6,5.4 L3.4,8.1 L6.2,5.4" fill="none" stroke="#3b3b3f" stroke-width="1.1"/></svg><div class="abs" style="left:52px;top:8px;width:1px;height:13px;background:#b0b0b0"></div><svg style="left:59px;top:9.4px" width="15" height="10.6" viewBox="0 0 15 10.6"><path d="M0.5,5.3 Q7.5,-3.6 14.5,5.3 Q7.5,14.2 0.5,5.3 Z" fill="none" stroke="#c9c9c9" stroke-width="1"/><circle cx="7.5" cy="5.1" r="2.3" fill="none" stroke="#c9c9c9" stroke-width="1"/></svg><svg style="left:80.7px;top:8px" width="13" height="13" viewBox="0 0 13 13"><circle cx="6.5" cy="6.5" r="5.9" fill="none" stroke="#c9c9c9" stroke-width="1"/><path d="M6.5,5.4 V9.8 M6.5,3.2 V4.2" stroke="#c9c9c9" stroke-width="1"/></svg><div class="abs fbox" style="left:406.6px;top:4.4px;width:172.6px;height:21.4px;background:#fbfbfb"></div><svg style="left:412.2px;top:9px" width="13" height="13" viewBox="0 0 13 13"><circle cx="6.5" cy="6.5" r="5.9" fill="none" stroke="#4b4549" stroke-width="1"/><path d="M2.7,6.6 A3.8,3.8 0 0 1 10.3,6.6 Z" fill="#5b5559"/></svg><span class="t" style="left:595.6px;top:7px;font-size:11.9px;line-height:16px;color:#16161e">All Output</span><svg style="left:652.3px;top:10.8px" width="7" height="9" viewBox="0 0 7 9"><path d="M0.6,3.4 L3.4,0.7 L6.2,3.4 M0.6,5.4 L3.4,8.1 L6.2,5.4" fill="none" stroke="#3b3b3f" stroke-width="1.1"/></svg><svg style="left:1075px;top:7px" width="13" height="15" viewBox="0 0 13 15"><g fill="none" stroke="#6b6b6b" stroke-width="1"><path d="M0.4,2.6 H12.6 M4.4,2.4 V0.6 H8.6 V2.4"/><path d="M1.6,2.8 L2.6,14.4 H10.4 L11.4,2.8"/><path d="M4.4,4.6 L4.7,12.6 M6.5,4.6 V12.6 M8.6,4.6 L8.3,12.6"/></g></svg><div class="abs" style="left:1095px;top:8px;width:1px;height:13px;background:#b0b0b0"></div><svg style="left:1100.9px;top:6.8px" width="15" height="15" viewBox="0 0 15 15"><rect x="0.8" y="0.8" width="13.3" height="13.3" fill="none" stroke="#1b7df2" stroke-width="1.6"/><rect x="3.3" y="2.7" width="1.7" height="9.6" fill="#1b7df2"/></svg><svg style="left:1119.2px;top:6.8px" width="15" height="15" viewBox="0 0 15 15"><rect x="0.8" y="0.8" width="13.3" height="13.3" fill="none" stroke="#1b7df2" stroke-width="1.6"/><rect x="9.9" y="2.7" width="1.7" height="9.6" fill="#1b7df2"/></svg>
 </div>
 <div id="vsplit" class="abs"></div>
</div>
</body>
</html>
